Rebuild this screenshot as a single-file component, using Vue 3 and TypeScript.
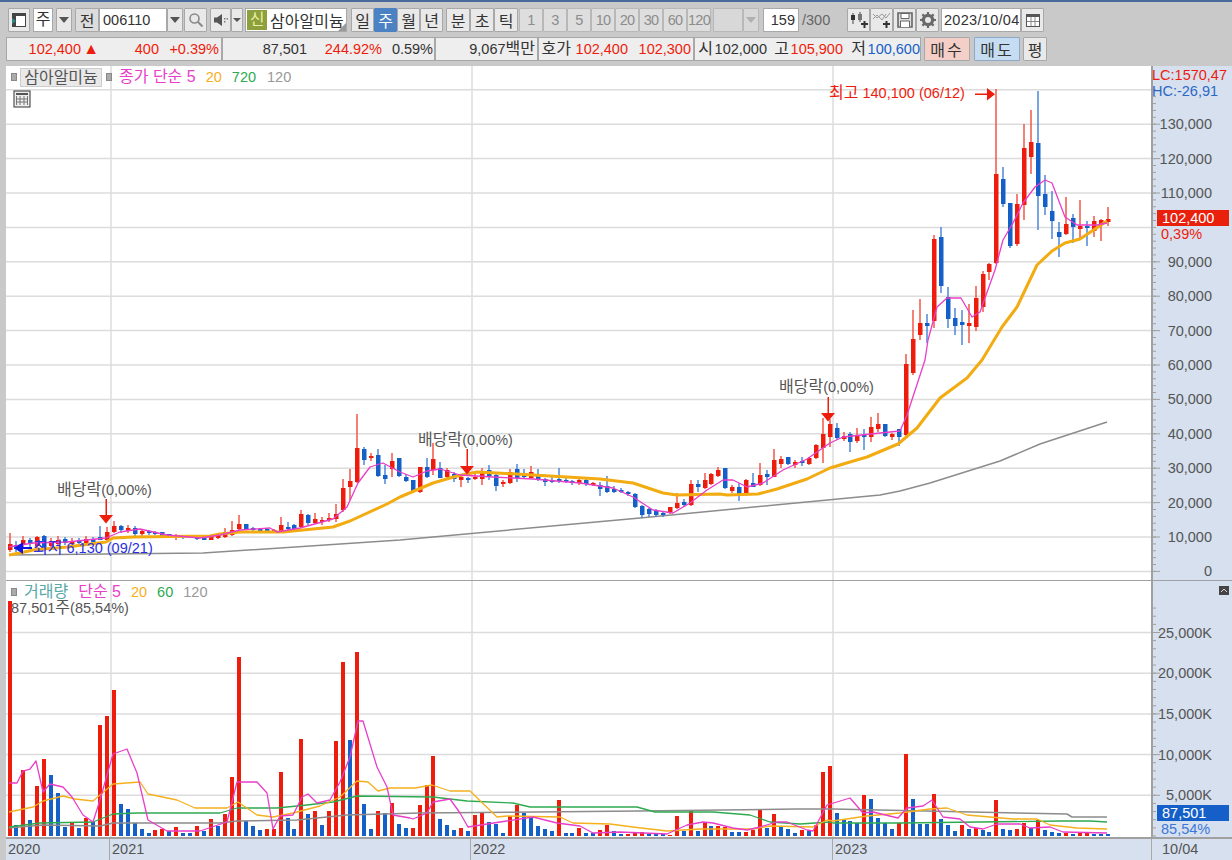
<script setup lang="ts">
	// candle = [wick top, body top, body bottom, wick bottom, 1 red / 0 blue], all in page y
	type Candle = [number, number, number, number, number];

	const candle_rows: Candle[] = [
		[533,544,550,552,1],[541,545,549,552,0],[536,540,544,548,1],[538,540,544,548,0],[536,537,546,550,1],[535,536,548,550,0],[538,541,546,548,1],
		[536,540,544,546,1],[537,539,543,545,0],[538,541,544,546,1],[538,540,543,544,0],[536,539,543,545,1],[537,539,542,543,0],[526,537,540,540,0],
		[527,532,540,540,1],[521,526,532,533,1],[525,526,530,533,0],[525,528,531,533,1],[526,528,534,537,0],[530,531,534,537,1],[530,531,533,535,0],
		[531,532,533,535,0],[532,532,536,537,0],[534,534,537,537,0],[534,535,537,540,1],[535,535,537,539,0],[536,536,538,538,0],[537,537,539,540,0],
		[538,538,540,540,0],[535,536,540,540,1],[533,535,538,539,1],[528,532,537,538,1],[521,530,535,536,1],[515,524,529,530,1],[524,524,530,530,0],
		[527,528,530,532,0],[528,529,531,533,0],[528,529,531,533,0],[529,530,532,533,1],[517,525,531,532,1],[522,527,529,530,0],[524,525,529,530,0],
		[510,514,527,528,1],[514,515,523,525,0],[513,519,523,524,1],[517,520,522,525,1],[513,518,520,522,1],[504,514,519,522,1],[479,488,510,512,1],
		[469,481,487,500,1],[414,448,482,483,1],[447,449,460,465,0],[453,456,458,461,1],[449,455,476,477,0],[465,475,479,484,0],[453,461,469,477,1],
		[458,458,476,477,0],[474,477,481,482,0],[480,480,491,492,0],[467,467,492,493,1],[458,467,477,478,0],[443,459,470,475,1],[462,468,478,478,0],
		[468,470,477,480,1],[472,474,479,482,0],[475,477,480,487,1],[477,478,479,483,0],[472,477,479,480,1],[468,471,479,485,1],[465,470,476,480,0],
		[473,475,486,491,0],[480,482,484,487,1],[469,472,483,484,1],[464,469,478,482,0],[469,474,477,478,0],[466,472,478,478,1],[469,474,480,481,0],
		[478,479,482,486,0],[477,480,482,483,0],[468,479,481,483,0],[478,480,481,483,0],[480,481,482,485,0],[477,480,483,485,1],[477,480,484,486,0],
		[482,483,485,486,1],[482,485,489,496,0],[476,486,492,493,0],[486,489,492,493,0],[488,490,492,493,0],[491,492,494,496,0],[493,494,507,508,0],
		[505,506,515,518,0],[508,509,514,517,0],[509,511,515,517,0],[512,513,514,517,0],[507,507,513,514,1],[493,503,508,509,1],[499,502,505,507,0],
		[480,484,505,506,1],[480,484,487,492,0],[473,480,488,489,1],[473,474,484,485,1],[467,470,476,477,1],[468,468,488,489,0],[485,487,491,493,1],
		[483,487,496,501,0],[479,480,494,496,1],[473,483,487,487,0],[463,475,485,486,1],[470,474,477,485,0],[449,460,477,477,1],[456,459,464,468,1],
		[457,457,464,465,0],[460,462,465,468,1],[457,461,463,466,0],[457,458,464,465,1],[444,445,458,459,1],[418,434,448,463,1],[419,424,437,447,1],
		[423,428,438,440,0],[432,436,439,441,1],[432,434,442,452,0],[428,436,441,443,1],[429,435,437,450,0],[417,427,437,442,1],[413,424,429,432,1],
		[424,424,436,437,0],[433,434,437,440,1],[429,429,437,446,0],[354,364,435,437,1],[310,339,373,375,1],[299,323,335,340,1],[314,323,326,343,0],
		[235,239,321,328,1],[227,237,286,293,0],[287,297,319,328,0],[308,318,326,335,0],[310,322,325,345,0],[304,323,326,343,1],[286,298,327,331,1],
		[271,274,307,312,1],[263,264,272,280,1],[89,174,263,264,1],[167,179,204,207,0],[203,203,246,248,0],[194,204,244,246,1],[124,148,205,220,1],
		[110,142,157,174,1],[91,143,196,230,0],[175,194,207,215,0],[191,211,221,239,0],[222,232,237,257,0],[197,224,234,235,1],[214,218,227,243,0],
		[200,226,229,239,1],[221,226,228,246,0],[216,221,231,237,1],[219,220,225,241,1],[207,219,222,226,1],
	];

	// top of each volume bar in page y, negative = blue
	const volume_tops: number[] = [
		601,-825,770,-820,786,759,-775,-793,-827,822,-828,818,-822,725,716,690,-804,-809,-823,-829,-833,830,829,-831,827,-833,-833,826,-831,819,
		-826,814,777,657,-821,-826,-830,829,829,772,-818,-829,739,-814,811,-825,811,741,662,-740,652,-804,-829,811,-813,803,-824,-828,828,805,
		785,756,-819,-825,-830,828,-831,815,812,-822,-824,-833,816,805,-813,-817,-826,-829,-831,800,-833,-833,828,-833,-833,830,825,-831,-834,834,
		832,832,-834,-834,-834,835,816,-831,810,-831,822,-826,826,827,-832,-832,832,830,809,-828,814,-827,-829,-833,830,-831,825,772,766,-813,
		-819,-821,-823,795,-799,-818,-823,-829,823,754,-799,-824,-824,794,-819,-825,-831,825,-829,828,-830,-832,800,-829,-830,829,823,-828,820,-830,
		-832,-833,833,-834,832,832,-834,-834,-834,
	];

	const candles = candle_rows.map((row, i) => {
		const x = Math.round(9.5 + 6.95 * i);
		return { x, hi: row[0], top: row[1], bot: row[2], lo: row[3], color: row[4] ? "#ee1c0c" : "#1560c8", wick: row[4] ? "#ef4a3c" : "#4080d8" };
	});

	const volumes = volume_tops.map((v, i) => {
		const top = Math.abs(v);
		return { x: Math.round(9.5 + 6.95 * i) - 2, top, height: 836 - top, color: v > 0 ? "#ee1c0c" : "#1560c8" };
	});

	const ma5_price = "9,547 33,543 67,542 106,538 120,532 140,529 167,535 200,538 220,535 240,530 270,528 277,532 300,528 333,519 347,507 358,483 370,467 383,463 400,472 413,477 427,471 440,469 460,475 493,477 533,479 580,483 613,488 633,497 653,510 673,513 690,503 707,490 723,480 733,480 747,487 763,483 783,470 807,459 830,443 843,437 880,433 900,431 907,415 925,360 928,340 937,307 947,298 961,298 972,317 980,312 995,270 1003,240 1013,223 1023,203 1035,187 1045,180 1052,183 1065,217 1077,225 1097,225 1107,223";
	const ma20_price = "9,555 20,553 33,550 67,547 106,542 113,538 133,537 210,536 220,534 240,532 283,532 313,529 333,527 350,521 387,504 400,497 433,483 457,476 477,472 497,473 533,475 567,477 600,479 633,483 663,493 677,495 720,494 727,495 758,494 777,489 807,479 830,468 850,462 867,457 898,444 917,428 940,398 967,378 982,360 1002,327 1017,307 1037,265 1052,251 1065,243 1080,239 1107,221";
	const ma720_price = "9,555 203,553 400,540 640,518 880,495 900,491 930,483 1000,461 1040,444 1107,422";

	const ma5_volume = "9,783 17,783 23,771 30,769 36,761 43,792 50,784 63,787 72,797 83,815 93,822 100,800 113,754 127,749 137,773 148,820 167,831 200,831 227,822 237,782 257,782 267,793 273,829 280,816 293,815 302,797 308,794 317,803 330,800 340,782 350,757 358,721 363,721 377,767 387,787 393,815 410,818 413,819 427,813 433,802 450,799 460,813 468,827 500,822 533,817 557,823 580,826 593,833 620,832 667,834 687,825 703,822 713,823 733,828 747,830 760,827 777,822 787,822 807,830 813,831 827,805 850,798 863,813 873,812 898,818 907,808 923,806 932,800 943,817 960,819 970,827 983,829 997,824 1020,824 1030,828 1050,827 1063,832 1107,833";
	const ma20_volume = "9,812 33,807 43,801 63,796 75,799 93,801 113,784 140,782 148,794 177,800 195,808 227,808 238,802 257,815 273,817 293,813 320,806 340,797 357,781 368,782 378,791 390,788 415,788 432,785 450,791 470,791 497,817 507,816 560,817 573,823 610,824 633,827 667,831 700,829 753,829 770,826 813,827 827,820 833,821 867,816 900,813 930,809 947,808 967,815 1013,819 1037,819 1050,825 1077,828 1107,829";
	const ma60_volume = "9,827 40,823 93,822 113,814 137,813 220,813 237,808 277,808 307,805 333,802 357,796 433,797 467,801 513,803 530,807 637,807 655,812 713,812 750,815 770,822 800,824 830,822 833,823 900,823 1060,821 1090,821 1107,822";
	const ma120_volume = "9,828 43,825 100,826 113,823 220,823 237,821 297,820 347,815 420,813 640,811 797,809 833,809 1067,814 1072,817 1107,817";

	const year_lines = [111, 472, 833];

	// price scale: 10,000 every 34.4px, 130,000 at y 124.5
	const price_y = (p: number) => 571.4 - (p / 10000) * 34.4;
	const price_labels = [130, 120, 110, 90, 80, 70, 60, 50, 40, 30, 20, 10, 0].map((k) => ({
		y: price_y(k * 1000),
		text: k === 0 ? "0" : `${k},000`,
	}));
	const price_grid = Array.from({ length: 15 }, (_, i) => price_y(i * 10000));
	const price_minor = Array.from({ length: 71 }, (_, i) => price_y(i * 2000)).filter((y) => y > 68);

	const volume_y = (k: number) => 836 - (k / 5000) * 40.7;
	const volume_grid = [5000, 10000, 15000, 20000, 25000].map((k) => ({
		y: volume_y(k),
		text: `${k.toLocaleString("en-US")}K`,
	}));
	const volume_minor = Array.from({ length: 30 }, (_, i) => volume_y(i * 1000)).filter((y) => y > 600);

	const interval_nums = ["1", "3", "5", "10", "20", "30", "60", "120"];
	const intervals = ["일", "주", "월", "년"];
</script>

<template>
	<div class="screen">
		<div class="toolbar">
			<div class="row">
				<button class="btn w22">
					<svg width="18" height="16" viewBox="0 0 18 16"><rect x="2.500" y="1.500" width="13" height="13" fill="#fff" stroke="#444" /><rect x="2" y="1" width="14" height="3" fill="#444" /><rect x="2" y="1" width="4" height="14" fill="#444" /><path d="M2 6l4 3-4 3z" fill="#2a8a8a" /></svg>
				</button>
				<div class="field w20 center gap2 ko">주</div>
				<button class="btn w16 gap3"><i class="caret"></i></button>
				<button class="btn w24 gap3 pressed ko">전</button>
				<div class="field w68">006110</div>
				<button class="btn w16"><i class="caret"></i></button>
				<button class="btn w23 gap1">
					<svg width="16" height="16" viewBox="0 0 16 16"><circle cx="6.500" cy="6.500" r="4.500" fill="none" stroke="#8a8a8a" stroke-width="1.600" /><path d="M10 10l4.500 4.500" stroke="#8a8a8a" stroke-width="2" /></svg>
				</button>
				<button class="btn w21 gap3">
					<svg width="16" height="14" viewBox="0 0 16 14"><path d="M1 4.500h3L9 1v12L4 9.500H1z" fill="#555" /><path d="M11 5h1.400v1.400H11zM13.600 5H15v1.400h-1.400zM11 8h1.400v1.400H11z" fill="#777" /></svg>
				</button>
				<button class="btn w12"><i class="caret small"></i></button>
				<div class="name ko">
					<span class="new">신</span>
					<span>삼아알미늄</span>
					<i class="corner"></i>
				</div>
				<div class="seg gap4">
					<button v-for="label in intervals" :key="label" class="btn w23 ko" :class="{ active: label === '주' }">{{ label }}</button>
				</div>
				<div class="seg gap3">
					<button class="btn w24 ko">분</button>
					<button class="btn w24 ko">초</button>
					<button class="btn w24 ko">틱</button>
				</div>
				<div class="nums">
					<button v-for="n in interval_nums" :key="n" class="btn num">{{ n }}</button>
				</div>
				<div class="btn w30 gap2 blank"></div>
				<button class="btn w16 blank"><i class="caret faint"></i></button>
				<div class="field count">159</div>
				<span class="total">/300</span>
				<button class="btn w23 icon-first">
					<svg width="20" height="18" viewBox="0 0 20 18"><path d="M4 2v11M11 1v10" stroke="#444" /><rect x="2" y="4" width="4" height="5" fill="#333" /><rect x="9" y="3" width="4" height="6" fill="#777" /><path d="M12 13h7M15.500 10v7" stroke="#333" stroke-width="2" /></svg>
				</button>
				<button class="btn w23">
					<svg width="20" height="18" viewBox="0 0 20 18"><path d="M1 3l4 4 5-4 4 4 4-5M1 8l4-4 5 5 4-6" fill="none" stroke="#999" /><path d="M11 13h7M14.500 10v7" stroke="#333" stroke-width="2" /></svg>
				</button>
				<button class="btn w23">
					<svg width="18" height="18" viewBox="0 0 18 18"><path d="M2 2h14v14H2z" fill="#ddd" stroke="#666" stroke-width="1.600" /><path d="M5 2.500h8v5H5z" fill="#fff" stroke="#666" /><path d="M4.500 16v-6h9v6" fill="#fff" stroke="#666" /></svg>
				</button>
				<button class="btn w23">
					<svg width="18" height="18" viewBox="0 0 18 18"><circle cx="9" cy="9" r="4.600" fill="none" stroke="#6a6a6a" stroke-width="3.200" /><path d="M9 1v3M9 14v3M1 9h3M14 9h3M3.400 3.400l2 2M12.600 12.600l2 2M3.400 14.600l2-2M12.600 5.400l2-2" stroke="#6a6a6a" stroke-width="2.200" /></svg>
				</button>
				<div class="field date">2023/10/04</div>
				<button class="btn w23">
					<svg width="16" height="15" viewBox="0 0 16 15"><rect x="1.500" y="1.500" width="13" height="12" fill="#fff" stroke="#555" /><rect x="1" y="1" width="14" height="3" fill="#555" /><path d="M6 4v9M10 4v9M2 8.500h12" stroke="#888" /></svg>
				</button>
			</div>
			<div class="row quote-row">
				<div class="panel p1">
					<span class="up" style="width: 74px">102,400</span>
					<span class="tri">▲</span>
					<span class="up" style="width: 60px">400</span>
					<span class="up" style="width: 60px">+0.39%</span>
				</div>
				<div class="panel p2">
					<span style="width: 84px">87,501</span>
					<span class="up" style="width: 75px">244.92%</span>
					<span style="width: 51px">0.59%</span>
				</div>
				<div class="panel p3">
					<span style="width: 99px">9,067<b class="ko">백만</b></span>
				</div>
				<div class="panel p4">
					<span class="ko" style="width: 30px">호가</span>
					<span class="up" style="width: 57px">102,400</span>
					<span class="up" style="width: 63px">102,300</span>
				</div>
				<div class="panel p5">
					<span class="ko" style="width: 17px">시</span>
					<span style="width: 54px">102,000</span>
					<span class="ko" style="width: 22px">고</span>
					<span class="up" style="width: 54px">105,900</span>
					<span class="ko" style="width: 23px">저</span>
					<span class="down" style="width: 54px">100,600</span>
				</div>
				<button class="btn buy ko">매수</button>
				<button class="btn sell ko">매도</button>
				<button class="btn w24 avg ko">평</button>
			</div>
		</div>

		<div class="chart">
			<div class="pane price-pane">
				<svg class="plot" width="1145" height="514" viewBox="6 66 1145 514">
					<line v-for="y in price_grid" :key="y" x1="6" x2="1151" :y1="y" :y2="y" class="grid" />
					<line v-for="x in year_lines" :key="x" :x1="x" :x2="x" y1="66" y2="580" class="grid" />
					<polyline :points="ma720_price" class="ma gray" />
					<g v-for="(c, i) in candles" :key="i">
						<rect :x="c.x - 0.7" :y="c.hi" width="1.400" :height="c.lo - c.hi" :fill="c.wick" />
						<rect :x="c.x - 2" :y="c.top" width="4.500" :height="Math.max(c.bot - c.top, 2)" :fill="c.color" />
					</g>
					<polyline :points="ma20_price" class="ma orange-thick" />
					<polyline :points="ma5_price" class="ma magenta" />
					<g fill="#ee1c0c">
						<path d="M105.500 499h1.500v16h-1.500zM99 515h14l-7 8.500zM466.500 449h1.500v17h-1.500zM460 466h14l-7 8.500zM827.500 397h1.500v16h-1.500zM821 413h14l-7 8.500z" />
						<path d="M975 93.500h14v1.500h-14zM987 88l8 6.200-8 6.200z" />
					</g>
					<path d="M14 548l9-6v5h9v2h-9v5z" fill="#0b16e0" />
				</svg>
				<div class="axis">
					<svg width="81" height="514" viewBox="1151 66 81 514">
						<line x1="1152" x2="1152" y1="66" y2="580" class="axis-line" />
						<line v-for="y in price_minor" :key="y" x1="1152" x2="1156" :y1="y" :y2="y" class="tick" />
						<g v-for="l in price_labels" :key="l.text">
							<line x1="1152" x2="1160" :y1="l.y" :y2="l.y" class="tick" />
							<text x="1212" :y="l.y + 5" class="axis-text" text-anchor="end">{{ l.text }}</text>
						</g>
					</svg>
				</div>
				<div class="lc">LC:1570,47</div>
				<div class="hc">HC:-26,91</div>
				<div class="tag up-tag">102,400</div>
				<div class="tag-sub up">0,39%</div>

				<div class="legend">
					<i class="dot"></i>
					<span class="legend-name ko">삼아알미늄</span>
					<i class="dot"></i>
					<span class="m4 c-magenta ko">종가 단순 5</span>
					<span class="m10 c-orange">20</span>
					<span class="m10 c-green">720</span>
					<span class="m11 c-gray">120</span>
				</div>
				<div class="table-icon">
					<svg width="18" height="18" viewBox="0 0 18 18"><rect x="1" y="1" width="16" height="16" fill="#eee" stroke="#333" /><rect x="3" y="3" width="12" height="2" fill="#555" /><path d="M3.500 6v9M7 6v9M11 6v9M14.500 6v9M3 9h12M3 12h12" stroke="#777" /></svg>
				</div>
				<span class="note" style="left: 51px; top: 414px"><b class="ko">배당락</b>(0,00%)</span>
				<span class="note" style="left: 412px; top: 364px"><b class="ko">배당락</b>(0,00%)</span>
				<span class="note" style="left: 773px; top: 311px"><b class="ko">배당락</b>(0,00%)</span>
				<span class="note c-high" style="left: 823px; top: 17px"><b class="ko">최고</b> 140,100 (06/12)</span>
				<span class="note c-low" style="left: 27px; top: 472px"><b class="ko">최저</b> 6,130 (09/21)</span>
			</div>

			<div class="pane volume-pane">
				<svg class="plot" width="1145" height="256" viewBox="6 581 1145 256">
					<line v-for="g in volume_grid" :key="g.y" x1="6" x2="1151" :y1="g.y" :y2="g.y" class="grid" />
					<line v-for="x in year_lines" :key="x" :x1="x" :x2="x" y1="581" y2="837" class="grid" />
					<rect v-for="(v, i) in volumes" :key="i" :x="v.x" :y="v.top" width="4" :height="v.height" :fill="v.color" />
					<polyline :points="ma120_volume" class="ma gray" />
					<polyline :points="ma60_volume" class="ma green" />
					<polyline :points="ma20_volume" class="ma orange" />
					<polyline :points="ma5_volume" class="ma magenta" />
				</svg>
				<div class="axis">
					<svg width="81" height="256" viewBox="1151 581 81 256">
						<line x1="1152" x2="1152" y1="581" y2="837" class="axis-line" />
						<line v-for="y in volume_minor" :key="y" x1="1152" x2="1156" :y1="y" :y2="y" class="tick" />
						<g v-for="g in volume_grid" :key="g.text">
							<line x1="1152" x2="1160" :y1="g.y" :y2="g.y" class="tick" />
							<text x="1212" :y="g.y + 5" class="axis-text" text-anchor="end">{{ g.text }}</text>
						</g>
					</svg>
				</div>
				<div class="collapse">
					<svg width="10" height="9" viewBox="0 0 10 9"><rect width="10" height="9" fill="#444" /><path d="M2 6l3-3 3 3" fill="none" stroke="#ddd" /></svg>
				</div>
				<div class="tag vol-tag">87,501</div>
				<div class="tag-sub vol-sub">85,54%</div>
				<div class="legend vol-legend">
					<i class="dot"></i>
					<span class="m4 c-teal ko">거래량</span>
					<span class="m10 c-magenta ko">단순 5</span>
					<span class="m10 c-orange">20</span>
					<span class="m10 c-green">60</span>
					<span class="m10 c-gray">120</span>
				</div>
				<span class="note vol-note">87,501<b class="ko">주</b>(85,54%)</span>
			</div>

			<div class="dates">
				<div class="years">
					<span style="width: 104px">2020</span>
					<span style="width: 361px">2021</span>
					<span style="width: 362px">2022</span>
					<span class="last">2023</span>
				</div>
				<div class="end-date">10/04</div>
			</div>
		</div>
	</div>
</template>

<style>
	body {
		margin: 0;
		background: #c9c9c9;
	}
</style>

<style scoped>
	.screen {
		width: 1232px;
		height: 860px;
		overflow: hidden;
		display: flex;
		flex-direction: column;
		background: #c9c9c9;
		border-top: 2px solid #4a6a9c;
		box-sizing: border-box;
		font-family: "Liberation Sans", "Noto Sans CJK KR", sans-serif;
		font-size: 14.500px;
		color: #333;
	}

	/* hangul runs wider than the digits next to it */
	.ko {
		font-size: 16px;
		font-weight: 400;
	}

	.toolbar {
		display: flex;
		flex-direction: column;
		gap: 5px;
		padding: 6px 0 0 8px;
		height: 64px;
		box-sizing: border-box;
	}

	.row {
		display: flex;
		height: 24px;
	}

	.btn {
		display: flex;
		align-items: center;
		justify-content: center;
		flex: none;
		box-sizing: border-box;
		height: 24px;
		padding: 0;
		background: #e9e9e9;
		border: 1.500px solid #a8a8a8;
		border-radius: 1px;
		font-family: inherit;
		font-size: 14.500px;
		color: #333;
	}

	.btn.ko {
		font-size: 16px;
	}

	.btn.pressed {
		background: #dcdcdc;
	}

	.btn.active {
		background: #4a82c4;
		border-color: #4a82c4;
		color: #fff;
	}

	.btn.blank {
		background: #d8d8d8;
		border-color: #b8b8b8;
	}

	.field {
		flex: none;
		box-sizing: border-box;
		height: 24px;
		line-height: 22px;
		padding-left: 3px;
		background: #fff;
		border: 1px solid #a8a8a8;
		white-space: nowrap;
	}

	.center {
		padding: 0;
		text-align: center;
	}

	.w12 { width: 12px; }
	.w16 { width: 16px; }
	.w20 { width: 20px; }
	.w21 { width: 21px; }
	.w22 { width: 22px; }
	.w23 { width: 23px; }
	.w24 { width: 24px; }
	.w30 { width: 30px; }
	.w68 { width: 68px; }

	.gap1 { margin-left: 1px; }
	.gap2 { margin-left: 3px; }
	.gap3 { margin-left: 3px; }
	.gap4 { margin-left: 4px; }

	.caret {
		width: 0;
		height: 0;
		border: 5px solid transparent;
		border-top: 6px solid #555;
		border-bottom: 0;
	}

	.caret.small {
		border-width: 4px 4px 0;
	}

	.caret.faint {
		border-top-color: #b0b0b0;
	}

	.name {
		position: relative;
		display: flex;
		align-items: center;
		gap: 3px;
		flex: none;
		box-sizing: border-box;
		width: 102px;
		height: 24px;
		margin-left: 2px;
		padding-left: 1px;
		background: #fff;
		border: 1px solid #a8a8a8;
		white-space: nowrap;
		overflow: hidden;
	}

	.new {
		width: 20px;
		height: 20px;
		flex: none;
		line-height: 20px;
		text-align: center;
		background: #8e9f3d;
		color: #e8f0a0;
	}

	.corner {
		position: absolute;
		right: 0;
		bottom: 0;
		border: 4px solid transparent;
		border-right-color: #999;
		border-bottom-color: #999;
	}

	.seg {
		display: flex;
	}

	.nums {
		display: flex;
		margin-left: 1px;
	}

	.btn.num {
		width: 24px;
		background: #dedede;
		border-color: #b8b8b8;
		color: #8c8c8c;
		letter-spacing: -0.700px;
	}

	.btn.w30.gap2 {
		margin-left: 2px;
	}

	.count {
		width: 36px;
		margin-left: 4px;
		text-align: right;
		padding-right: 3px;
	}

	.total {
		width: 45px;
		flex: none;
		margin-left: 3px;
		line-height: 24px;
		color: #666;
	}

	.btn.icon-first {
		margin-left: 0;
	}

	.date {
		width: 80px;
		margin-left: 2px;
		padding-left: 2px;
		letter-spacing: 0.300px;
	}

	.quote-row {
		display: flex;
		height: 24px;
		margin-left: -2px;
	}

	.panel {
		display: flex;
		flex: none;
		box-sizing: border-box;
		height: 24px;
		line-height: 22px;
		background: #eeeeee;
		border: 1px solid #a8a8a8;
		white-space: nowrap;
	}

	.panel span {
		display: inline-block;
		flex: none;
		text-align: right;
	}

	.panel span.tri {
		width: 18px;
		font-size: 16px;
		color: #ee1c0c;
	}

	.p1 { width: 216px; }
	.p2 { width: 213px; }
	.p3 { width: 103px; }
	.p4 { width: 156px; padding-left: 2px; }
	.p5 { width: 227px; padding-left: 1px; }

	.up {
		color: #ee1c0c;
	}

	.down {
		color: #1560c8;
	}

	.btn.buy,
	.btn.sell {
		width: 46px;
		letter-spacing: 2px;
	}

	.btn.buy {
		margin-left: 3px;
		background: #f3cfc8;
	}

	.btn.sell {
		margin-left: 4px;
		background: #c5dcf2;
		border-color: #8fa8c4;
	}

	.btn.avg {
		margin-left: 3px;
	}

	.chart {
		display: flex;
		flex-direction: column;
		margin-left: 6px;
		width: 1226px;
	}

	.pane {
		position: relative;
		display: flex;
		background: #fff;
	}

	.price-pane {
		height: 514px;
		border-bottom: 1px solid #a0a0a0;
		box-sizing: content-box;
	}

	.volume-pane {
		height: 256px;
	}

	.plot {
		display: block;
		flex: none;
	}

	.axis {
		flex: none;
		background: #d6e0ee;
	}

	.axis svg {
		display: block;
	}

	.grid {
		stroke: #dcdcdc;
		stroke-width: 1.500;
	}

	.ma {
		fill: none;
		stroke-width: 1.300;
		stroke-linejoin: round;
	}

	.magenta { stroke: #e83ec8; }
	.orange { stroke: #f5b01e; }
	.orange-thick { stroke: #f2ab10; stroke-width: 3; }
	.green { stroke: #2eaa50; }
	.gray { stroke: #8c8c8c; stroke-width: 1.500; }

	.axis-line {
		stroke: #a0a0a0;
		stroke-width: 2;
	}

	.tick {
		stroke: #a0a0a0;
	}

	.axis-text {
		font-size: 14.500px;
		fill: #555;
	}

	.lc,
	.hc {
		position: absolute;
		left: 1146px;
		white-space: nowrap;
		line-height: 18px;
	}

	.lc {
		top: 0;
		color: #ee1c0c;
	}

	.hc {
		top: 16px;
		color: #2a68c8;
	}

	.tag {
		position: absolute;
		left: 1151px;
		width: 72px;
		box-sizing: border-box;
		padding-left: 5px;
		line-height: 16px;
		height: 16px;
		color: #fff;
	}

	.up-tag {
		top: 144px;
		background: #e8200c;
	}

	.vol-tag {
		top: 224px;
		background: #1560c8;
	}

	.tag-sub {
		position: absolute;
		left: 1155px;
		top: 159px;
		line-height: 18px;
	}

	.vol-sub {
		top: 239px;
		color: #3a78d8;
	}

	.legend {
		position: absolute;
		left: 5px;
		top: 1px;
		display: flex;
		align-items: center;
		height: 20px;
		line-height: 16px;
		white-space: nowrap;
	}

	.dot {
		width: 4px;
		height: 6px;
		background: #aaa;
		border: 1px solid #888;
		box-sizing: content-box;
		margin-right: 3px;
	}

	.legend-name {
		width: 82px;
		height: 19px;
		line-height: 17px;
		background: #e9e9e9;
		border: 1px solid #ccc;
		margin-right: 4px;
		box-sizing: border-box;
		text-align: center;
		color: #555;
	}

	.m4 { margin-left: 4px; }
	.m10 { margin-left: 10px; }
	.m11 { margin-left: 11px; }

	.c-magenta { color: #e83ec8; }
	.c-orange { color: #f5b01e; }
	.c-green { color: #2eaa50; }
	.c-gray { color: #999; }
	.c-teal { color: #58a8a8; }

	.table-icon {
		position: absolute;
		left: 7px;
		top: 24px;
		line-height: 0;
	}

	.note {
		position: absolute;
		white-space: nowrap;
		line-height: 20px;
		color: #555;
	}

	.note.vol-note {
		left: 5px;
		top: 19px;
		line-height: 16px;
	}

	.c-high {
		color: #ee1c0c;
	}

	.c-low {
		color: #2a30e0;
	}

	.collapse {
		position: absolute;
		left: 1213px;
		top: 5px;
		line-height: 0;
	}

	.dates {
		display: flex;
		height: 23px;
		background: #d6e0ee;
		border-top: 2px solid #a0a0a0;
		box-sizing: border-box;
		color: #555;
	}

	.years {
		display: flex;
		flex: none;
		width: 1145px;
		line-height: 21px;
	}

	.years span {
		flex: none;
		box-sizing: border-box;
		padding-left: 2px;
		border-right: 1.500px solid #a8a8a8;
	}

	.years span.last {
		border-right: 0;
		flex: 1;
	}

	.end-date {
		flex: 1;
		border-left: 1.500px solid #a8a8a8;
		padding-left: 10px;
		line-height: 21px;
	}
</style>
